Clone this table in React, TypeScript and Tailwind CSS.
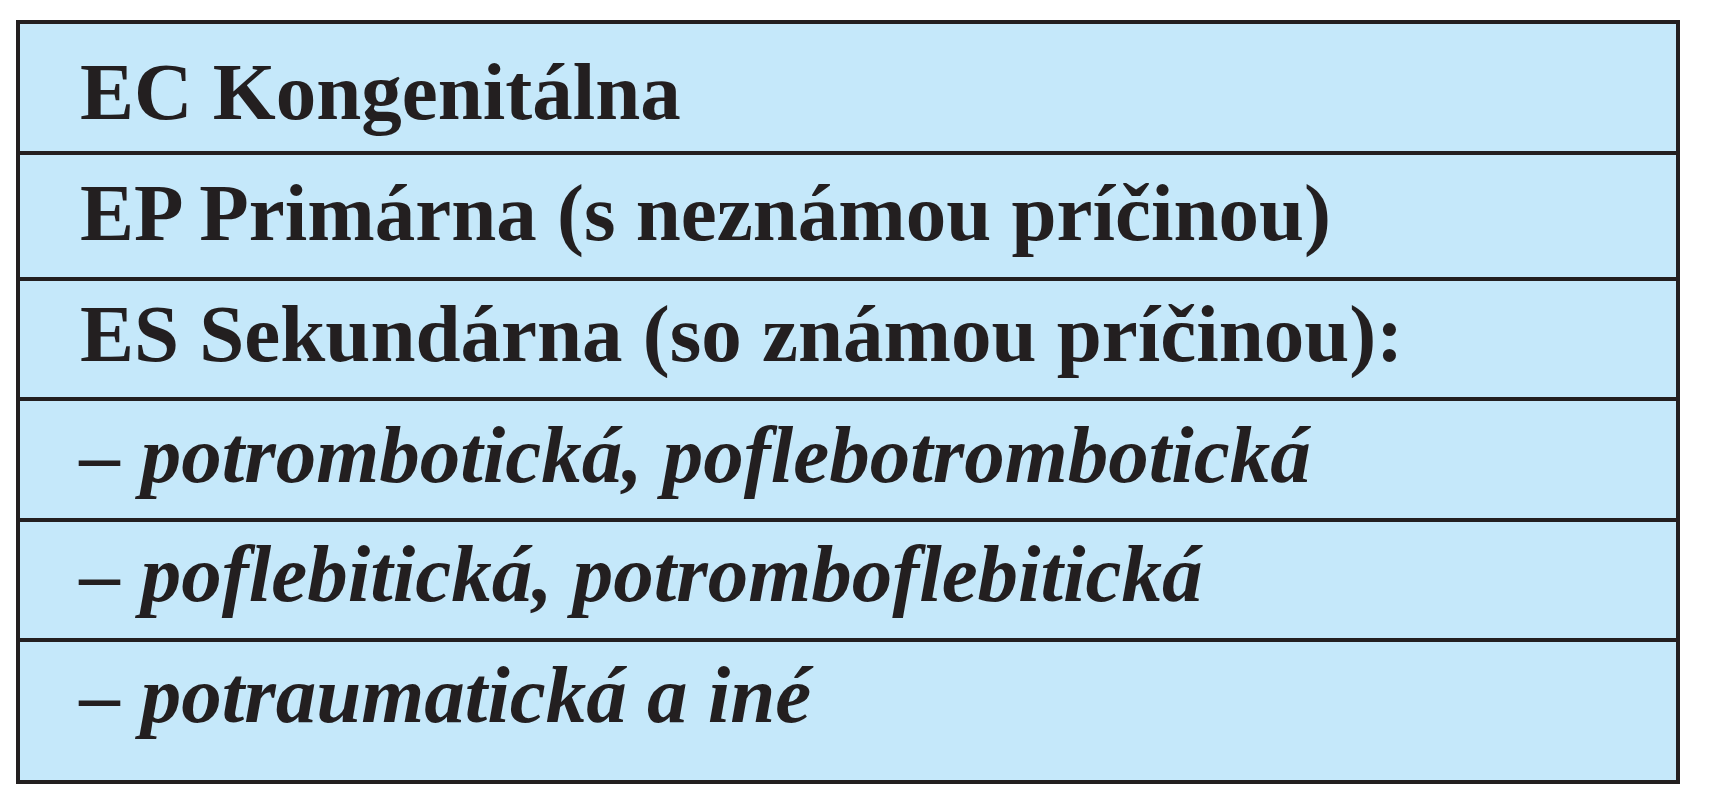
const rows = [
  { text: "EC Kongenitálna", italic: false, cls: "h-[131px] pt-[28px] border-b-4" },
  { text: "EP Primárna (s neznámou príčinou)", italic: false, cls: "h-[126px] pt-[18px] border-b-4" },
  { text: "ES Sekundárna (so známou príčinou):", italic: false, cls: "h-[120px] pt-[13px] border-b-4" },
  { text: "– potrombotická, poflebotrombotická", italic: true, cls: "h-[121px] pt-[14px] border-b-4" },
  { text: "– poflebitická, potromboflebitická", italic: true, cls: "h-[120px] pt-[12px] border-b-4" },
  { text: "– potraumatická a iné", italic: true, cls: "h-[138px] pt-[13px]" },
];

export default function App() {
  return (
    <div className="w-[1711px] h-[800px] bg-white pl-[16px] pt-[20px] font-['Liberation_Serif','Times_New_Roman',serif]">
      <div className="w-[1664px] border-4 border-[#231f20] bg-[#c5e8fa] text-[#231f20]">
        {rows.map((r) => (
          <div
            key={r.text}
            className={`${r.cls} border-[#231f20] pl-[60px] text-[81px] leading-[81px] font-bold whitespace-nowrap ${r.italic ? "italic" : ""}`}
          >
            {r.text}
          </div>
        ))}
      </div>
    </div>
  );
}
